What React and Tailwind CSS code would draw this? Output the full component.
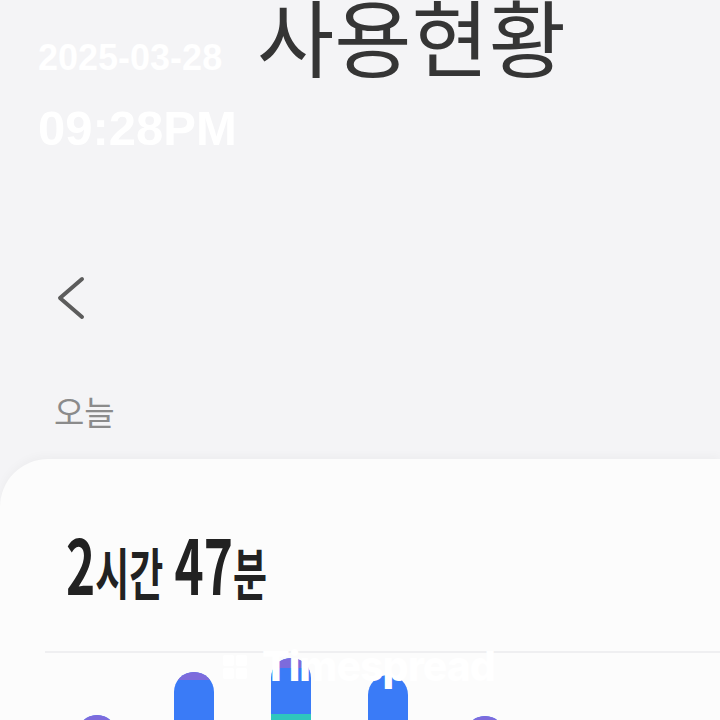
import React from 'react';

// top = y offset of the bar top below the divider, cap = purple cap, tealAt = where teal starts
const bars = [
  { top: 62, cap: 10, tealAt: 0 },
  { top: 19, cap: 8, tealAt: 0 },
  { top: 5, cap: 10, tealAt: 56 },
  { top: 22, cap: 0, tealAt: 0 },
  { top: 63, cap: 12, tealAt: 0 },
];

const Bar = ({ top, cap, tealAt }) => (
  <div className="w-10 h-[140px] flex flex-col shrink-0 rounded-t-full overflow-hidden bg-[#3a7bf7]" style={{ marginTop: top }}>
    <div className="bg-[#7d6bdc] shrink-0" style={{ height: cap }} />
    {tealAt > 0 && <div className="bg-[#2fc6bd] shrink-0" style={{ marginTop: tealAt - cap, height: 80 }} />}
  </div>
);

const App = () => {
  return (
    <div className="relative w-[720px] h-[720px] overflow-hidden bg-[#f4f4f6] flex flex-col" style={{ fontFamily: '"Noto Sans CJK KR", "Noto Sans", sans-serif' }}>
      <div className="pl-[257px] -mt-[7px] text-[84px] leading-none text-[#353535] font-normal">사용현황</div>

      <div className="pl-[56px] mt-[198px] h-[46px]">
        <svg width="30" height="46" viewBox="0 0 30 46" fill="none">
          <polyline points="26,4 4,23 26,42" stroke="#5c5c5c" strokeWidth="4" strokeLinecap="round" strokeLinejoin="round" />
        </svg>
      </div>

      <div className="pl-[54px] mt-[74px] text-[33px] leading-none text-[#8b8b8b]">오늘</div>

      <div className="mt-[31px] flex-1 bg-[#fcfcfc] rounded-tl-[48px] shadow-[0_-3px_10px_rgba(0,0,0,0.03)] flex flex-col">
        <div className="pl-[66px] pt-[66px] h-[192px] font-bold text-[#222] leading-none">
          <span className="inline-block origin-left scale-x-[0.66] text-[75px] whitespace-nowrap">
            2<span className="text-[56px]">시간</span> 47<span className="text-[56px]">분</span>
          </span>
        </div>
        <div className="ml-[45px] h-[2px] bg-[#efeff1]" />
        <div className="flex items-start gap-[57px] pl-[77px] h-[100px]">
          {bars.map((b, i) => (
            <Bar key={i} {...b} />
          ))}
        </div>
      </div>

      <div className="absolute left-[38px] top-[40px] text-white font-bold leading-none" style={{ fontFamily: '"Liberation Sans", Arial, sans-serif' }}>
        <div className="text-[36px]">2025-03-28</div>
        <div className="text-[49px] mt-[28px]">09:28PM</div>
      </div>

      <div className="absolute left-[222px] top-[646px] flex items-center gap-[14px] text-white" style={{ fontFamily: 'Inter, "Liberation Sans", sans-serif' }}>
        <svg width="26" height="26" viewBox="0 0 26 26" fill="white">
          <rect x="1" y="1" width="11" height="11" rx="2" />
          <rect x="14" y="1" width="11" height="11" rx="2" />
          <rect x="1" y="14" width="11" height="11" rx="2" />
          <rect x="14" y="14" width="11" height="11" rx="2" />
        </svg>
        <span className="text-[41px] font-extrabold leading-none tracking-[-1px]">Timespread</span>
      </div>
    </div>
  );
};

export default App;
